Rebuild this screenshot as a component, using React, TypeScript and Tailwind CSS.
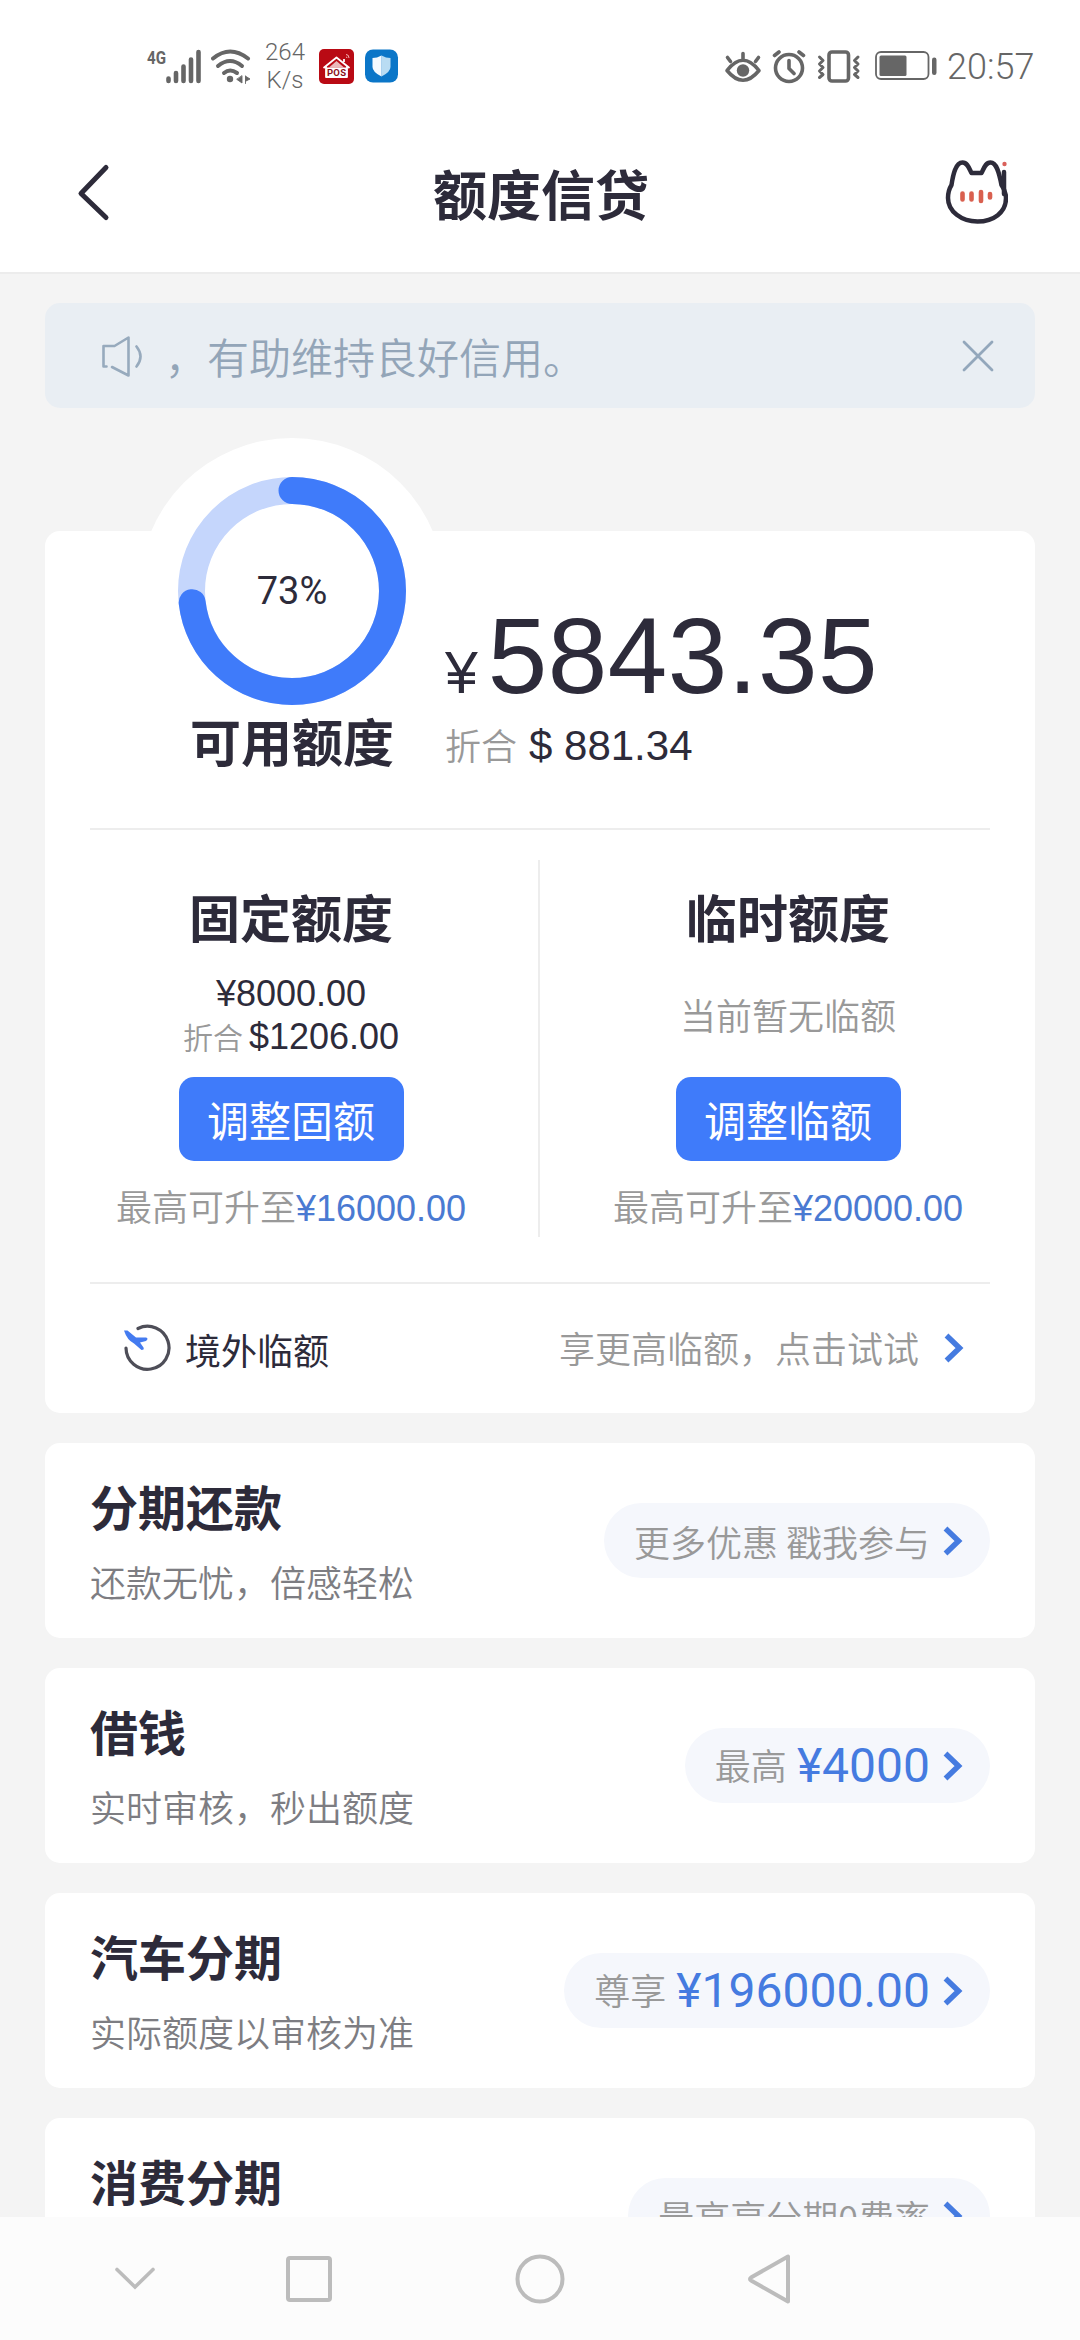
import React from "react";

const CJK = "font-['Noto_Sans_CJK_SC',sans-serif]";
const NUM = "font-['Liberation_Sans',sans-serif]";
const ROBOTO = "font-[Roboto,sans-serif]";

function StatusBar() {
  return (
    <div className="flex h-[114px] items-center pt-[18px] pl-[146px] pr-[44px] text-[#666666]">
      <svg width="56" height="36" viewBox="0 0 56 36" className="shrink-0">
        <text x="1" y="16" fontSize="19" fontWeight="700" fontFamily="Roboto, sans-serif" fill="#666666" textLength="19" lengthAdjust="spacingAndGlyphs">4G</text>
        <g stroke="#666666" strokeWidth="4.6" strokeLinecap="round">
          <path d="M22.5 30.5V33M30 25v8M37.5 18.5V33M45 11.5V33M52.5 4v29" />
        </g>
      </svg>
      <svg width="40" height="36" viewBox="0 0 40 36" className="ml-[9px] shrink-0" fill="none" stroke="#666666" strokeWidth="4" strokeLinecap="round">
        <path d="M2 10.500Q19 -3.500 37 10.500" />
        <path d="M7 18Q19 8 31 18" />
        <path d="M13 25Q19 20 26 25" />
        <circle cx="19" cy="31" r="3.200" fill="#666666" stroke="none" />
        <path d="M31 28v7l-5-3.500zM34.500 28v7.500M35 28.500l4 2.500-4 2z" fill="#666666" stroke="#666666" strokeWidth="0.900" />
      </svg>
      <div className={`ml-[14px] w-[40px] text-center text-[24px] leading-[28px] ${ROBOTO} font-light`}>
        <div>264</div>
        <div>K/s</div>
      </div>
      <svg width="35" height="35" viewBox="0 0 35 35" className="ml-[14px] shrink-0">
        <rect width="35" height="35" rx="5" fill="#b90a14" />
        <path d="M4.500 19L17.500 8.500 30.500 19M7 17.500V28h21V17.500M25 13v-3" fill="none" stroke="#fff" strokeWidth="1.800" strokeLinejoin="round" />
        <path d="M10 18.500L17.500 12l7.500 6.500z" fill="#e9b9bb" />
        <path d="M27 5.500q3 0 3 3.500M27 8q1 0 1 1" fill="none" stroke="#f7b5b5" strokeWidth="1" />
        <rect x="7" y="18.500" width="21" height="9.500" fill="#fff" />
        <text x="8" y="26.800" fontSize="9.500" fontWeight="700" fontFamily="Roboto, sans-serif" fill="#8b1018" textLength="19">POS</text>
      </svg>
      <svg width="34" height="34" viewBox="0 0 34 34" className="ml-[11px] shrink-0">
        <rect y="0.500" width="33" height="33" rx="8" fill="#0b76c8" />
        <path d="M16.500 6.500q4.500 2.500 9 2.500v9q0 5-9 9.500z" fill="#b9dcf3" />
        <path d="M16.500 6.500Q12 9 7.500 9v9q0 5 9 9.500z" fill="#f4faff" />
      </svg>
      <svg width="38" height="36" viewBox="0 0 38 36" className="ml-auto shrink-0" fill="none" stroke="#666666" strokeWidth="4" strokeLinecap="round">
        <path d="M3 22.500Q19 2 35 22.500 19 42 3 22.500z" strokeWidth="3.600" strokeLinejoin="round" />
        <circle cx="19" cy="22.500" r="6.200" fill="#666666" stroke="none" />
        <path d="M19 5.500v5M3.500 9.500l3 4M34.500 9.500l-3 4" strokeWidth="3.600" />
      </svg>
      <svg width="34" height="36" viewBox="0 0 34 36" className="ml-[10px] shrink-0" fill="none" stroke="#666666" strokeWidth="3.600" strokeLinecap="round" strokeLinejoin="round">
        <circle cx="17" cy="20" r="13.500" />
        <path d="M17 12.500v8l5 5M2.500 7.500L7 4M31.500 7.500L27 4" />
      </svg>
      <svg width="44" height="36" viewBox="0 0 44 36" className="ml-[11px] shrink-0" fill="none" stroke="#666666" strokeWidth="3.600" strokeLinecap="round" strokeLinejoin="round">
        <rect x="12" y="4" width="19.500" height="29" rx="3" />
        <path d="M2.500 9l3.500 3.500-3.500 3.500 3.500 3.500-3.500 3.500 3.500 3.500-3.500 3M41 9l-3.500 3.500L41 16l-3.500 3.500L41 23l-3.500 3.500 3.500 3" strokeWidth="3" />
      </svg>
      <svg width="62" height="32" viewBox="0 0 62 32" className="ml-[14px] shrink-0">
        <rect x="1" y="2" width="52.500" height="27" rx="5" fill="none" stroke="#666666" strokeWidth="1.800" />
        <rect x="4.500" y="5.500" width="27" height="20.500" rx="1.500" fill="#666666" />
        <rect x="57" y="7.500" width="4.500" height="17.500" rx="2.200" fill="#666666" />
      </svg>
      <div className={`ml-[10px] w-[89px] pt-[2px] text-[36px] leading-[36px] font-light ${ROBOTO}`}>20:57</div>
    </div>
  );
}

function Header() {
  return (
    <div className="flex h-[160px] items-center border-b-2 border-[#ececec] pl-[76px] pr-[72px]">
      <svg width="62" height="60" viewBox="0 0 62 60" fill="none" stroke="#2d2b3a" strokeWidth="5" strokeLinecap="round" strokeLinejoin="round" className="mb-[3px]">
        <path d="M30 5.500L5 31.500 30 55.500" />
      </svg>
      <h1 className={`flex-1 text-center text-[54px] leading-[80px] font-bold text-[#2d2b3a] ${CJK}`}>额度信贷</h1>
      <svg width="64" height="66" viewBox="0 0 64 66" fill="none" className="mb-[5px]">
        <path d="M7.500 27C9 17 11.500 4.500 18.500 4.500c5 0 6.500 5.500 9 10.500h10c2.500-5 4-10.500 9-10.500 6 0 8.500 9.500 11 22.500 3 4.500 4.500 8.500 4.500 13 0 14.500-12.500 23.500-28.500 23.500S4 53.500 4 40c0-5 1-9 3.500-13z" stroke="#2d2b3a" strokeWidth="4.500" strokeLinejoin="round" />
        <path d="M60 14v22" stroke="#2d2b3a" strokeWidth="4.500" strokeLinecap="round" />
        <circle cx="60.500" cy="6" r="2.200" fill="#d9605a" />
        <path d="M18.500 35.500v6M27.500 35.500v6M37 34v9M46 36v3.500" stroke="#d9604f" strokeWidth="4.600" strokeLinecap="round" />
      </svg>
    </div>
  );
}

function Notice() {
  return (
    <div className="mt-[29px] flex h-[105px] shrink-0 items-center rounded-[15px] bg-[#e9eef3] pl-[54px] pr-[41px]">
      <svg width="44" height="44" viewBox="0 0 44 44" fill="none" stroke="#97aabd" strokeWidth="2.600" strokeLinecap="round" strokeLinejoin="round">
        <path d="M7.500 32.500h-3V12h11L29.500 3.500v38L13 33" />
        <path d="M37.500 12.500q8 10 0 20" />
      </svg>
      <span className={`ml-[22px] flex-1 text-[42px] leading-[64px] font-[350] text-[#93a5b8] ${CJK}`}>，有助维持良好信用。</span>
      <svg width="32" height="32" viewBox="0 0 32 32" stroke="#93a7bb" strokeWidth="2.800" strokeLinecap="round">
        <path d="M2 2l28 28M30 2L2 30" />
      </svg>
    </div>
  );
}

function Ring({ percent }: { percent: number }) {
  const r = 100.5;
  const c = 2 * Math.PI * r;
  return (
    <div className="relative h-[228px] w-[228px]">
      <svg width="228" height="228" viewBox="0 0 228 228" fill="none" strokeWidth="27">
        <circle cx="114" cy="114" r={r} stroke="#c5d6fc" />
        <circle cx="114" cy="114" r={r} stroke="#3f7bfa" strokeLinecap="round" strokeDasharray={`${(c * percent) / 100} ${c}`} transform="rotate(-90 114 114)" />
      </svg>
      <div className={`absolute inset-0 flex items-center justify-center text-[38px] text-[#2d2b3a] ${ROBOTO}`}>{percent}%</div>
    </div>
  );
}

function Chevron() {
  return (
    <svg width="22" height="32" viewBox="0 0 22 32" fill="none" stroke="#457be0" strokeWidth="5.500" className="shrink-0">
      <path d="M3.500 3.500L16.500 16 3.500 28.500" />
    </svg>
  );
}

function QuotaColumn({ title, button, max, children }: { title: string; button: string; max: string; children: React.ReactNode }) {
  return (
    <div className="flex w-[394px] flex-col items-center">
      <h2 className={`text-[51px] leading-[76px] font-bold text-[#2d2b3a] ${CJK}`}>{title}</h2>
      <div className="flex h-[123px] flex-col items-center justify-center">{children}</div>
      <button className={`flex h-[84px] w-[225px] items-center justify-center rounded-[15px] bg-[#3f7bfa] text-[42px] leading-[60px] text-white ${CJK}`}>{button}</button>
      <div className="mt-[17px] flex items-baseline text-[36px] leading-[54px] whitespace-nowrap">
        <span className={`text-[#999999] font-[350] ${CJK}`}>最高可升至</span>
        <span className={`text-[#4a7ad2] ${NUM}`}>{max}</span>
      </div>
    </div>
  );
}

function OverseasIcon() {
  return (
    <svg width="50" height="50" viewBox="0 0 50 50" fill="none">
      <path d="M16 5.500A21.500 21.500 0 1 1 4 25" stroke="#4e4e58" strokeWidth="3.200" strokeLinecap="round" />
      <path d="M2 7.500l3.500 0L14 14.500l10 0q3 1 0 3.500l-6 1.500 3.500 5q1 2.500-2 2.500L12 20.500Q5 17 2 7.500z" fill="#447bf0" />
    </svg>
  );
}

function CreditCard() {
  return (
    <div className="relative mt-[123px] h-[882px] shrink-0 rounded-[15px] bg-white px-[45px]">
      <div className="absolute -top-[93px] left-[94px] h-[306px] w-[306px] rounded-full bg-white" />
      <div className="relative flex h-[299px] border-b-2 border-[#ededed]">
        <div className="-mt-[54px] ml-[88px] flex w-[228px] flex-col items-center">
          <Ring percent={73} />
          <h2 className={`-mt-[3px] text-[51px] leading-[76px] font-bold whitespace-nowrap text-[#2d2b3a] ${CJK}`}>可用额度</h2>
        </div>
        <div className="ml-[39px] pt-[65px]">
          <div className={`flex items-baseline leading-[120px] text-[#2d2b3a] ${NUM}`}>
            <span className="text-[59px]">¥</span>
            <span className="ml-[10px] text-[107px] tracking-[0.5px]">5843.35</span>
          </div>
          <div className="-mt-[17px] flex items-baseline text-[42px] leading-[56px]">
            <span className={`text-[36px] font-[350] text-[#999999] ${CJK}`}>折合</span>
            <span className={`ml-[12px] text-[#2d2b3a] ${NUM}`}>$ 881.34</span>
          </div>
        </div>
      </div>
      <div className="flex h-[454px] items-start border-b-2 border-[#ededed]">
        <div className="ml-[4px] pt-[48px]">
          <QuotaColumn title="固定额度" button="调整固额" max="¥16000.00">
            <div className={`text-[36px] leading-[42px] text-[#2d2b3a] ${NUM}`}>¥8000.00</div>
            <div className="flex items-baseline text-[36px] leading-[42px]">
              <span className={`text-[30px] font-[350] text-[#999999] ${CJK}`}>折合</span>
              <span className={`ml-[6px] text-[#2d2b3a] ${NUM}`}>$1206.00</span>
            </div>
          </QuotaColumn>
        </div>
        <div className="mt-[30px] ml-[50px] h-[377px] w-[2px] bg-[#ededed]" />
        <div className="ml-[51px] pt-[48px]">
          <QuotaColumn title="临时额度" button="调整临额" max="¥20000.00">
            <div className={`-mt-[3px] text-[36px] leading-[54px] font-[350] text-[#999999] ${CJK}`}>当前暂无临额</div>
          </QuotaColumn>
        </div>
      </div>
      <div className={`flex h-[128px] items-center pr-[25px] pl-[32px] text-[36px] leading-[54px] ${CJK}`}>
        <OverseasIcon />
        <span className="ml-[13px] pt-[2px] text-[#2d2b3a]">境外临额</span>
        <span className="ml-auto pb-[2px] font-[350] text-[#999999]">享更高临额，点击试试</span>
        <div className="ml-[24px]">
          <Chevron />
        </div>
      </div>
    </div>
  );
}

function ServiceCard({ title, sub, label, amount }: { title: string; sub?: string; label: string; amount?: string }) {
  return (
    <div className={`mt-[30px] flex h-[195px] shrink-0 items-start justify-between rounded-[15px] bg-white px-[45px] ${CJK}`}>
      <div className="pt-[26px]">
        <h3 className="text-[48px] leading-[72px] font-bold text-[#2d2b3a]">{title}</h3>
        {sub && <p className="mt-[13px] text-[36px] leading-[54px] font-[350] text-[#7d7d82]">{sub}</p>}
      </div>
      <div className="mt-[60px] flex h-[75px] items-center rounded-full bg-[#f5f7fc] pr-[26px] pl-[30px]">
        <span className={`text-[36px] leading-[54px] font-[350] whitespace-pre text-[#999999] ${amount ? "mb-[4px]" : ""}`}>{label}</span>
        {amount && <span className={`ml-[10px] text-[48px] leading-[56px] text-[#457be0] ${ROBOTO}`}>{amount}</span>}
        <div className="ml-[12px]">
          <Chevron />
        </div>
      </div>
    </div>
  );
}

function NavBar() {
  return (
    <div className="flex h-[123px] shrink-0 items-center bg-[#fcfcfc] pl-[114px]">
      <svg width="42" height="26" viewBox="0 0 42 26" fill="none" stroke="#bcbcbc" strokeWidth="3.600" strokeLinecap="round">
        <path d="M3 3.500l18 17.500L39 3.500" />
      </svg>
      <svg width="46" height="46" viewBox="0 0 46 46" fill="none" stroke="#bcbcbc" strokeWidth="4" className="ml-[130px]">
        <rect x="2" y="2" width="42" height="42" rx="2" />
      </svg>
      <svg width="50" height="50" viewBox="0 0 50 50" fill="none" stroke="#bcbcbc" strokeWidth="4" className="ml-[183px]">
        <circle cx="25" cy="25" r="22.500" />
      </svg>
      <svg width="44" height="52" viewBox="0 0 44 52" fill="none" stroke="#bcbcbc" strokeWidth="4" strokeLinejoin="round" className="ml-[182px]">
        <path d="M41 3.500v45L4 27.500q-2-1.500 0-3z" />
      </svg>
    </div>
  );
}

export default function App() {
  return (
    <div className="flex h-[2340px] w-[1080px] flex-col overflow-hidden bg-[#f4f4f4]">
      <div className="shrink-0 bg-white">
        <StatusBar />
        <Header />
      </div>
      <div className="flex h-[1943px] shrink-0 flex-col overflow-hidden px-[45px]">
        <Notice />
        <CreditCard />
        <ServiceCard title="分期还款" sub="还款无忧，倍感轻松" label="更多优惠 戳我参与" />
        <ServiceCard title="借钱" sub="实时审核，秒出额度" label="最高" amount="¥4000" />
        <ServiceCard title="汽车分期" sub="实际额度以审核为准" label="尊享" amount="¥196000.00" />
        <ServiceCard title="消费分期" label="最高享分期0费率" />
      </div>
      <NavBar />
    </div>
  );
}
